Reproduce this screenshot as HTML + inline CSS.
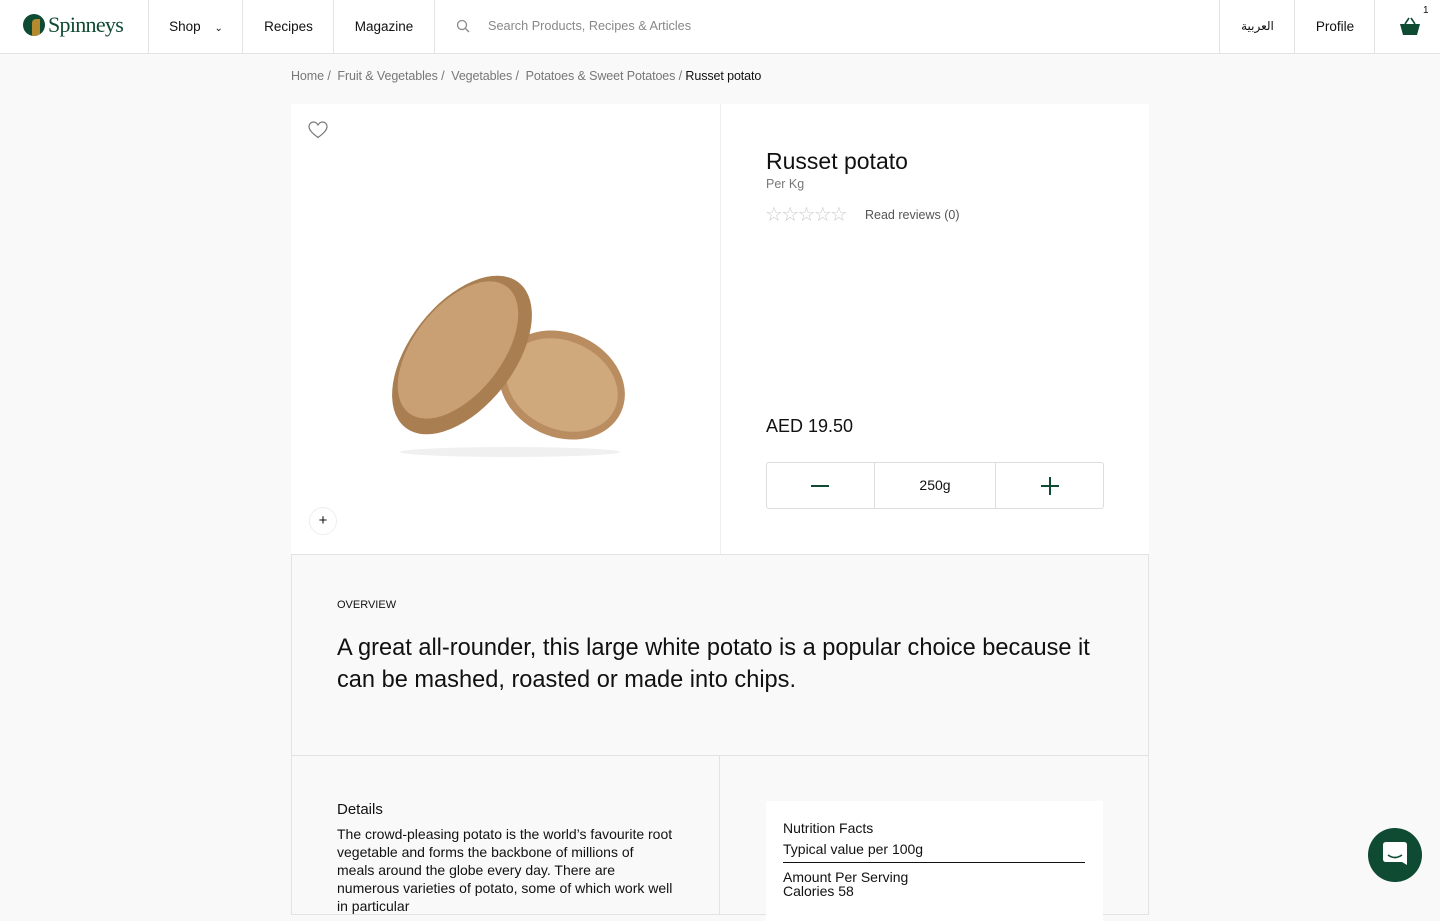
<!DOCTYPE html>
<html><head><meta charset="utf-8"><style>
*{box-sizing:border-box;margin:0;padding:0}
body{width:1440px;height:900px;overflow:hidden;background:#f9f9f9;font-family:"Liberation Sans",Arial,sans-serif;color:#111;position:relative}
.hdr{position:absolute;left:0;top:0;width:1440px;height:54px;background:#fff;border-bottom:1px solid #e3e3e3}
.hdr .c{position:absolute;top:0;height:53px;border-left:1px solid #e3e3e3;font-size:13.5px;line-height:53px;text-align:center}
.crumb{position:absolute;left:291px;top:69px;font-size:12.5px;color:#777;letter-spacing:-0.1px}
.crumb b{font-weight:normal;color:#111}
.card{position:absolute;background:#fff}
.bx{position:absolute;border:1px solid #e3e3e3}
</style></head><body>
<div class="hdr">
 <div style="position:absolute;left:23px;top:14px;width:22px;height:22px;border-radius:50%;background:#0f4a33;overflow:hidden"><div style="position:absolute;left:9px;top:5px;width:8px;height:17px;background:#b38a2e;border-radius:4px 0 0 0"></div></div>
 <div style="position:absolute;left:48px;top:12px;font-family:'Liberation Serif',serif;font-size:22px;color:#0f4a33;letter-spacing:-0.7px">Spinneys</div>
 <div class="c" style="left:148px;width:95px">Shop <span style="font-size:10px;margin-left:10px">&#8964;</span></div>
 <div class="c" style="left:242px;width:92px">Recipes</div>
 <div class="c" style="left:333px;width:102px;border-right:1px solid #e3e3e3">Magazine</div>
 <svg style="position:absolute;left:456px;top:19px" width="15" height="15" viewBox="0 0 15 15"><circle cx="6" cy="6" r="4.5" fill="none" stroke="#888" stroke-width="1.3"/><path d="M9.5 9.5L13 13" stroke="#888" stroke-width="1.3"/></svg>
 <div style="position:absolute;left:488px;top:19px;font-size:12.7px;color:#888">Search Products, Recipes &amp; Articles</div>
 <div class="c" style="left:1219px;width:76px;font-family:'DejaVu Sans',sans-serif;font-size:12px">العربية</div>
 <div class="c" style="left:1294px;width:81px">Profile</div>
 <div class="c" style="left:1374px;width:66px">
  <svg style="position:absolute;left:24px;top:16px" width="22" height="22" viewBox="0 0 22 22"><path d="M6 8L10 2M16 8L12 2" stroke="#0f4a33" stroke-width="1.6" fill="none"/><path d="M1 8H21L18 19H4Z" fill="#0f4a33"/></svg>
  <span style="position:absolute;left:48px;top:-16px;font-size:10px">1</span></div>
</div>
<div class="crumb">Home /&nbsp; Fruit &amp; Vegetables /&nbsp; Vegetables /&nbsp; Potatoes &amp; Sweet Potatoes / <b>Russet potato</b></div>
<div class="card" style="left:291px;top:104px;width:858px;height:450px"></div>
<div style="position:absolute;left:720px;top:104px;width:1px;height:450px;background:#eee"></div>
<svg style="position:absolute;left:308px;top:121px" width="20" height="18" viewBox="0 0 20 18"><path d="M10 16.5C4 12 1 9 1 5.5 1 3 3 1 5.5 1 7.5 1 9 2.3 10 4 11 2.3 12.5 1 14.5 1 17 1 19 3 19 5.5 19 9 16 12 10 16.5Z" fill="none" stroke="#777" stroke-width="1.2"/></svg>
<svg style="position:absolute;left:380px;top:260px" width="260" height="200" viewBox="0 0 260 200">
 <ellipse cx="130" cy="192" rx="110" ry="5" fill="#f0f0f0"/>
 <ellipse cx="182" cy="125" rx="65" ry="52" transform="rotate(25 182 125)" fill="#b98d5f"/>
 <ellipse cx="182" cy="125" rx="58" ry="44" transform="rotate(25 182 125)" fill="#cfa87c"/>
 <ellipse cx="82" cy="95" rx="52" ry="92" transform="rotate(38 82 95)" fill="#a97f52"/>
 <ellipse cx="78" cy="90" rx="44" ry="80" transform="rotate(38 78 90)" fill="#c9a074"/>
</svg>
<div style="position:absolute;left:309px;top:507px;width:28px;height:28px;border-radius:50%;border:1px solid #eee;text-align:center;line-height:26px;font-size:15px">+</div>
<div style="position:absolute;left:766px;top:148px;font-size:23px">Russet potato</div>
<div style="position:absolute;left:766px;top:177px;font-size:12.5px;color:#777">Per Kg</div>
<div style="position:absolute;left:765px;top:202px;font-size:20px;color:#ccc;letter-spacing:-1.7px;font-family:'DejaVu Sans',sans-serif">☆☆☆☆☆</div>
<div style="position:absolute;left:865px;top:208px;font-size:12.5px;color:#555">Read reviews (0)</div>
<div style="position:absolute;left:766px;top:416px;font-size:18px">AED 19.50</div>
<div style="position:absolute;left:766px;top:462px;width:338px;height:47px;border:1px solid #ddd;border-radius:3px"></div>
<div style="position:absolute;left:874px;top:462px;width:122px;height:47px;border-left:1px solid #ddd;border-right:1px solid #ddd;text-align:center;line-height:47px;font-size:14px">250g</div>
<div style="position:absolute;left:811px;top:485px;width:18px;height:2px;background:#0f4a33"></div>
<div style="position:absolute;left:1041px;top:485px;width:18px;height:2px;background:#0f4a33"></div>
<div style="position:absolute;left:1049px;top:477px;width:2px;height:18px;background:#0f4a33"></div>
<div class="bx" style="left:291px;top:554px;width:858px;height:202px;background:#f9f9f9"></div>
<div style="position:absolute;left:337px;top:599px;font-size:11px">OVERVIEW</div>
<div style="position:absolute;left:337px;top:632px;width:780px;font-size:23.6px;line-height:32px">A great all-rounder, this large white potato is a popular choice because it can be mashed, roasted or made into chips.</div>
<div class="bx" style="left:291px;top:755px;width:429px;height:160px"></div>
<div class="bx" style="left:719px;top:755px;width:430px;height:160px"></div>
<div style="position:absolute;left:337px;top:801px;font-size:15px">Details</div>
<div style="position:absolute;left:337px;top:825px;width:336px;font-size:14px;line-height:18px">The crowd-pleasing potato is the world’s favourite root vegetable and forms the backbone of millions of meals around the globe every day. There are numerous varieties of potato, some of which work well in particular</div>
<div class="card" style="left:766px;top:801px;width:337px;height:120px"></div>
<div style="position:absolute;left:783px;top:818px;font-size:14px;line-height:21px">Nutrition Facts<br>Typical value per 100g</div>
<div style="position:absolute;left:783px;top:862px;width:302px;height:1px;background:#111"></div>
<div style="position:absolute;left:783px;top:870px;font-size:14px;line-height:14px">Amount Per Serving<br>Calories 58</div>
<div style="position:absolute;left:1368px;top:828px;width:54px;height:54px;border-radius:50%;background:#0f4a33">
 <svg style="position:absolute;left:14px;top:13px" width="26" height="28" viewBox="0 0 26 28"><path d="M4 1H22Q25 1 25 4V24L20 21H4Q1 21 1 18V4Q1 1 4 1Z" fill="#fff"/><path d="M6 14Q13 19 20 14" stroke="#0f4a33" stroke-width="1.6" fill="none"/></svg>
</div>
</body></html>
